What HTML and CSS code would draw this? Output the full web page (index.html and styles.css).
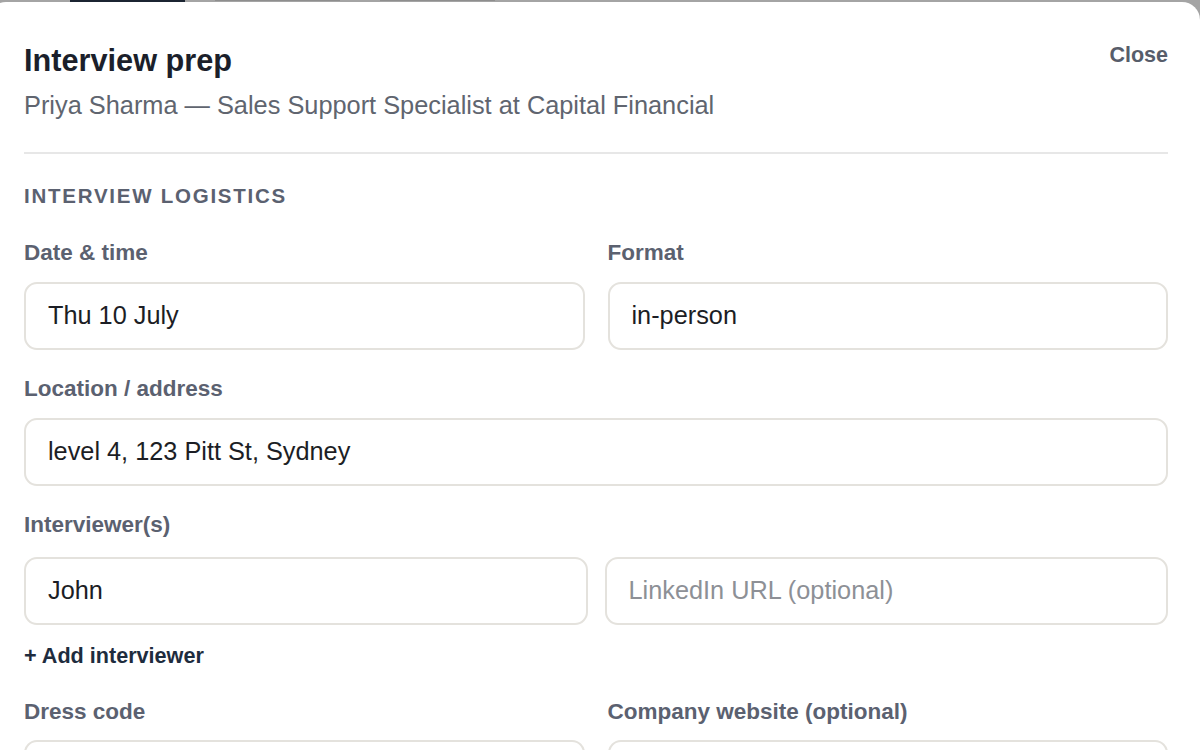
FILE: index.html
```html
<!DOCTYPE html>
<html lang="en">
<head>
<meta charset="utf-8">
<title>Interview prep</title>
<link rel="stylesheet" href="styles.css">
</head>
<body>
<div class="backdrop">
  <span class="bg-btn"></span>
  <span class="bg-text bg-text-1"></span>
  <span class="bg-text bg-text-2"></span>
</div>
<div class="modal">
  <header class="modal-head">
    <div class="head-text">
      <h1 class="title">Interview prep</h1>
      <p class="subtitle">Priya Sharma — Sales Support Specialist at Capital Financial</p>
    </div>
    <button class="close-btn" type="button">Close</button>
  </header>

  <section class="section">
    <h2 class="section-title">INTERVIEW LOGISTICS</h2>
    <div class="grid">
      <div class="field">
        <label class="label">Date &amp; time</label>
        <input class="input" type="text" value="Thu 10 July">
      </div>
      <div class="field">
        <label class="label">Format</label>
        <input class="input" type="text" value="in-person">
      </div>
      <div class="field span-2">
        <label class="label">Location / address</label>
        <input class="input" type="text" value="level 4, 123 Pitt St, Sydney">
      </div>
      <div class="field span-2 interviewers">
        <label class="label">Interviewer(s)</label>
        <div class="pair">
          <input class="input" type="text" value="John">
          <input class="input" type="text" placeholder="LinkedIn URL (optional)">
        </div>
        <button class="add-btn" type="button">+ Add interviewer</button>
      </div>
      <div class="field">
        <label class="label">Dress code</label>
        <input class="input" type="text">
      </div>
      <div class="field">
        <label class="label">Company website (optional)</label>
        <input class="input" type="text">
      </div>
    </div>
  </section>
</div>
</body>
</html>
```

FILE: styles.css
```css
html, body {
  margin: 0;
  padding: 0;
  height: 750px;
  overflow: hidden;
}

body {
  background: #a4a4a4;
  font-family: "Liberation Sans", Arial, sans-serif;
}

.backdrop {
  height: 2px;
  display: flex;
  align-items: flex-start;
  overflow: hidden;
}

.bg-btn {
  display: block;
  width: 115px;
  height: 2px;
  margin-left: 70px;
  background: #1b2431;
}

.bg-text {
  display: block;
  height: 1px;
  background: #8e8e8e;
}

.bg-text-1 {
  width: 125px;
  margin-left: 30px;
}

.bg-text-2 {
  width: 115px;
  margin-left: 40px;
}

.modal {
  margin-left: -12px;
  width: 1212px;
  box-sizing: border-box;
  padding: 41px 32px 0 36px;
  background: #ffffff;
  border-radius: 18px 18px 0 0;
  height: 900px;
}

.modal-head {
  display: flex;
  justify-content: space-between;
  align-items: flex-start;
  padding-bottom: 29px;
  border-bottom: 2px solid #e7e7e7;
}

.title {
  margin: 0;
  font-size: 30.7px;
  line-height: 36px;
  font-weight: 700;
  color: #1b1f2b;
}

.subtitle {
  margin: 8px 0 0;
  font-size: 25.35px;
  line-height: 36px;
  color: #60656f;
}

.close-btn {
  margin: 1px 0 0;
  padding: 0;
  border: 0;
  background: none;
  font-family: inherit;
  font-size: 21.5px;
  line-height: 22px;
  font-weight: 700;
  color: #575d6a;
  cursor: pointer;
}

.section {
  padding-top: 28px;
}

.section-title {
  margin: 0;
  font-size: 20.5px;
  line-height: 28px;
  font-weight: 700;
  letter-spacing: 1.75px;
  color: #5b6170;
}

.grid {
  margin-top: 29px;
  display: grid;
  grid-template-columns: 1fr 1fr;
  column-gap: 23px;
  row-gap: 25.5px;
}

.field {
  display: flex;
  flex-direction: column;
  gap: 14.5px;
}

.span-2 {
  grid-column: 1 / span 2;
}

.interviewers {
  gap: 17.5px;
  margin-bottom: 2px;
}

.label {
  font-size: 22.5px;
  line-height: 28px;
  font-weight: 700;
  color: #5b6170;
}

.input {
  display: block;
  box-sizing: border-box;
  width: 100%;
  height: 68px;
  margin: 0;
  padding: 0 22px;
  border: 2px solid #e4e2dd;
  border-radius: 13px;
  background: #ffffff;
  font-family: inherit;
  font-size: 25.3px;
  color: #1c1e25;
  outline: none;
}

.input::placeholder {
  color: #8d9096;
}

.pair {
  display: flex;
  gap: 17px;
}

.pair .input {
  flex: 1;
  min-width: 0;
}

.add-btn {
  align-self: flex-start;
  margin: 0;
  padding: 0;
  border: 0;
  background: none;
  font-family: inherit;
  font-size: 21.6px;
  line-height: 28px;
  font-weight: 700;
  color: #1e2c3e;
  cursor: pointer;
}
```
